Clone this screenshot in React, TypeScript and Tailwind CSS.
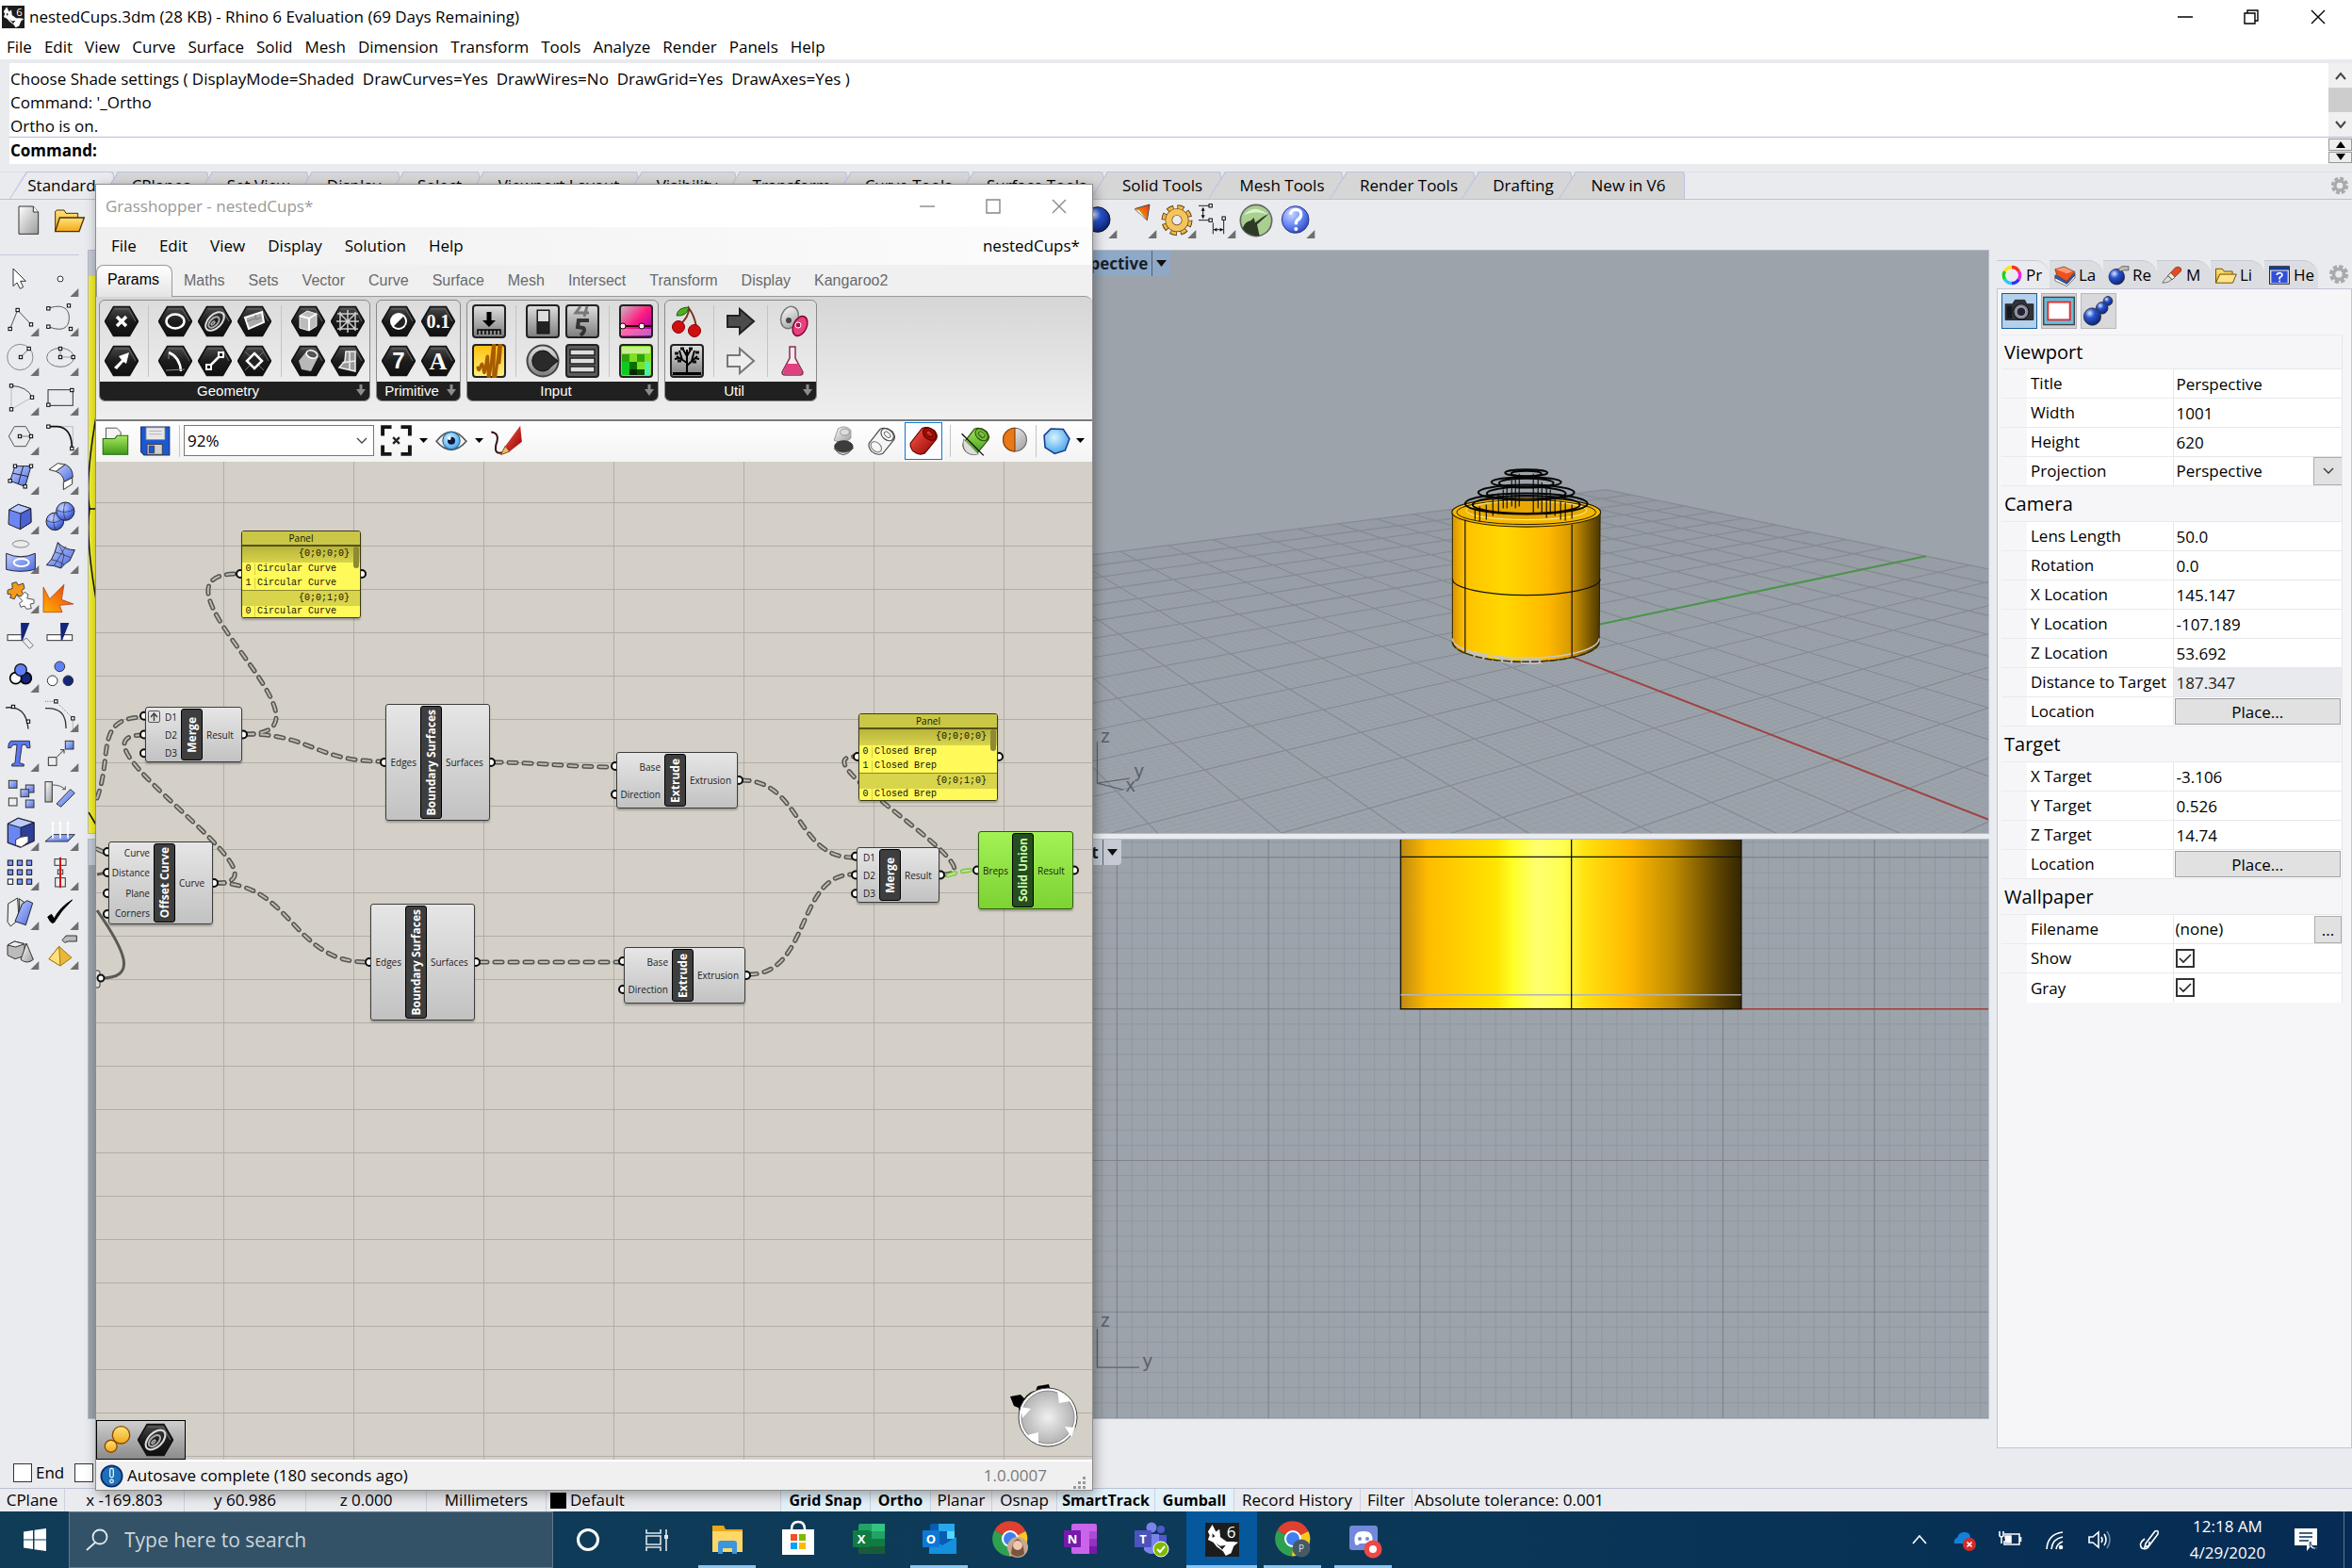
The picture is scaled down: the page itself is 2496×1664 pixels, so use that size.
import React from "react";
import type { ReactNode } from "react";

/* ---------- shared bits ---------- */

function Defs() {
  return (
    <svg width="0" height="0" className="absolute" aria-hidden="true">
      <defs>
        <linearGradient id="blue" x1="0" y1="0" x2="1" y2="1">
          <stop offset="0" stopColor="#c3d0ff" />
          <stop offset="1" stopColor="#4a6be0" />
        </linearGradient>
        <radialGradient id="ball" cx=".35" cy=".3" r=".8">
          <stop offset="0" stopColor="#c9d6ff" />
          <stop offset=".6" stopColor="#5c7df0" />
          <stop offset="1" stopColor="#2c3f9c" />
        </radialGradient>
        <radialGradient id="navy" cx=".35" cy=".3" r=".8">
          <stop offset="0" stopColor="#dfe8ff" />
          <stop offset=".35" stopColor="#2a55d0" />
          <stop offset="1" stopColor="#071a66" />
        </radialGradient>
        <linearGradient id="grey" x1="0" y1="0" x2="1" y2="1">
          <stop offset="0" stopColor="#ffffff" />
          <stop offset="1" stopColor="#9a9a9a" />
        </linearGradient>
        <linearGradient id="gold" x1="0" y1="0" x2="0" y2="1">
          <stop offset="0" stopColor="#ffe37a" />
          <stop offset="1" stopColor="#f0a818" />
        </linearGradient>
        <linearGradient id="fire" x1="0" y1="1" x2="1" y2="0">
          <stop offset="0" stopColor="#ffb000" />
          <stop offset="1" stopColor="#e83a10" />
        </linearGradient>
        <linearGradient id="dark" x1="0" y1="0" x2="0" y2="1">
          <stop offset="0" stopColor="#4a4a4a" />
          <stop offset=".5" stopColor="#1c1c1c" />
          <stop offset="1" stopColor="#101010" />
        </linearGradient>
        <linearGradient id="steel" x1="0" y1="0" x2="0" y2="1">
          <stop offset="0" stopColor="#e0e0e0" />
          <stop offset="1" stopColor="#7c7c7c" />
        </linearGradient>
        <radialGradient id="dial">
          <stop offset="0" stopColor="#f0f0f0" />
          <stop offset="1" stopColor="#b4b4b4" />
        </radialGradient>
        <linearGradient id="green" x1="0" y1="0" x2="0" y2="1">
          <stop offset="0" stopColor="#a8e860" />
          <stop offset="1" stopColor="#3f9a18" />
        </linearGradient>
        <linearGradient id="pink" x1="0" y1="0" x2="1" y2="1">
          <stop offset="0" stopColor="#c9c0c4" />
          <stop offset=".5" stopColor="#ff1a80" />
          <stop offset="1" stopColor="#7a00c0" />
        </linearGradient>
        <linearGradient id="yellow" x1="0" y1="0" x2="0" y2="1">
          <stop offset="0" stopColor="#ffbe10" />
          <stop offset="1" stopColor="#fff27a" />
        </linearGradient>
        <linearGradient id="red" x1="0" y1="0" x2="1" y2="1">
          <stop offset="0" stopColor="#ff5a4a" />
          <stop offset="1" stopColor="#8c0000" />
        </linearGradient>
        <radialGradient id="cyan" cx=".4" cy=".35" r=".7">
          <stop offset="0" stopColor="#d6f4ff" />
          <stop offset="1" stopColor="#3f9fe8" />
        </radialGradient>
        <linearGradient id="cup" x1="0" y1="0" x2="1" y2="0">
          <stop offset="0" stopColor="#d89400" />
          <stop offset=".08" stopColor="#ffc200" />
          <stop offset=".35" stopColor="#ffd800" />
          <stop offset=".65" stopColor="#ffb800" />
          <stop offset=".8" stopColor="#d89a00" />
          <stop offset="1" stopColor="#4a3600" />
        </linearGradient>
        <linearGradient id="cupFront" x1="0" y1="0" x2="1" y2="0">
          <stop offset="0" stopColor="#c08a10" />
          <stop offset=".08" stopColor="#ffbc00" />
          <stop offset=".28" stopColor="#ffe400" />
          <stop offset=".33" stopColor="#ffff28" />
          <stop offset=".4" stopColor="#ffff70" />
          <stop offset=".48" stopColor="#ffff50" />
          <stop offset=".54" stopColor="#ffe210" />
          <stop offset=".67" stopColor="#ffb900" />
          <stop offset=".8" stopColor="#c08c00" />
          <stop offset=".93" stopColor="#5e4500" />
          <stop offset="1" stopColor="#332500" />
        </linearGradient>
      </defs>
    </svg>
  );
}

function Svg({ s = 42, box = 126, children }: { s?: number; box?: number; children: ReactNode }) {
  return (
    <svg width={s} height={s} viewBox={`0 0 ${box} ${box}`} fill="none" stroke="#333" strokeWidth="3" aria-hidden="true" className="shrink-0">
      {children}
    </svg>
  );
}

function Sq({ p }: { p: number[][] }) {
  return (
    <>
      {p.map(([x, y]) => (
        <rect key={`${x}-${y}`} x={x - 5} y={y - 5} width="10" height="10" fill="#fff" stroke="#000" strokeWidth="3" />
      ))}
    </>
  );
}

const Corner = () => <path d="M124 93V120H97Z" fill="#6f6f6f" stroke="none" />;

function RhinoLogo({ w, h }: { w: number; h: number }) {
  return (
    <svg width={w} height={h} viewBox="0 0 38 38" aria-hidden="true" className="shrink-0">
      <rect width="38" height="38" fill="#1c1c1c" />
      <path d="M8 2l4 8 4-3 1 9 7 5 7 0 6 1-5 4-3 8-6 3-3-5-7-5-4-5-6-3 2-5-2-4z" fill="#fff" />
      <path d="M12 23l5 3 6-1-4 5-3-3zM8 12l3 3-3 2z" fill="#1c1c1c" />
      <text x="24" y="17" fontSize="18" fill="#fff" fontFamily="Open Sans">6</text>
    </svg>
  );
}

/* ---------- Rhino tool palette ---------- */

const palette: { name: string; flat?: boolean; art: ReactNode }[] = [
  { name: "Select", flat: true, art: <path d="M42 30V86L54 75 64 94 74 89 65 70H82Z" fill="#fff" /> },
  { name: "Point", art: <circle cx="66" cy="63" r="9" fill="#fff" /> },
  { name: "Polyline", art: <><path d="M32 96 56 36 99 82" stroke="#555" /><Sq p={[[56, 36], [32, 96], [99, 82]]} /></> },
  { name: "Curve", art: <><path d="M28 31C70 15 95 30 94 62S72 106 28 89" stroke="#555" /><Sq p={[[28, 31], [93, 22], [28, 89], [99, 96]]} /></> },
  { name: "Circle", art: <><circle cx="64" cy="60" r="41" stroke="#888" /><path d="M66 60 92 33" stroke="#777" /><Sq p={[[66, 60], [92, 33]]} /></> },
  { name: "Ellipse", art: <><ellipse cx="66" cy="61" rx="43" ry="30" stroke="#777" /><path d="M66 33V60H107" stroke="#999" /><Sq p={[[66, 33], [66, 60], [107, 60]]} /></> },
  { name: "Arc", art: <><path d="M36 25V100L102 62" stroke="#bbb" /><path d="M36 25Q88 28 102 62" stroke="#444" /><Sq p={[[36, 25], [102, 62], [36, 100]]} /></> },
  { name: "Rectangle", art: <><rect x="27" y="38" width="79" height="50" stroke="#333" /><Sq p={[[103, 39], [28, 86]]} /></> },
  { name: "Polygon", art: <><path d="M46 29H82L100 60 82 92H46L28 60Z" stroke="#555" /><path d="M63 60H99" stroke="#777" /><Sq p={[[63, 60], [99, 60]]} /></> },
  { name: "Fillet", art: <><path d="M28 29H106V99" stroke="#bbb" /><path d="M28 29H56Q103 32 103 99" strokeWidth="5" stroke="#111" /><Sq p={[[28, 29], [103, 99]]} /></> },
  { name: "Surface", art: <><path d="M48 29H99L80 94 32 76Z" fill="url(#blue)" stroke="#223" /><path d="M74 29 58 86M42 52 90 62" stroke="#223" /><Sq p={[[48, 29], [99, 29], [80, 94], [32, 76]]} /></> },
  { name: "Blend surface", art: <><path d="M30 40 58 20 82 24 52 46Z" fill="#fff" /><path d="M52 46 82 24Q106 34 106 64L78 78Q76 56 52 46Z" fill="url(#blue)" /><path d="M76 80 104 66V86L76 104Z" fill="#fff" /></> },
  { name: "Box", art: <><path d="M29 42 58 25 98 38 99 82 64 104 27 88Z" fill="#6a86f4" stroke="#223" /><path d="M29 42 58 25 98 38 66 54Z" fill="#bccbff" stroke="#223" /><path d="M66 54 98 38 99 82 64 104Z" fill="#4a62d4" stroke="#223" /></> },
  { name: "Boolean union", art: <><circle cx="49" cy="79" r="28" fill="url(#ball)" stroke="#223" /><circle cx="82" cy="47" r="29" fill="url(#ball)" stroke="#223" /><path d="M55 44Q85 56 110 40M82 18Q70 50 84 76M22 76Q48 90 68 74M49 52Q38 80 52 107" stroke="#223" strokeWidth="2" /></> },
  { name: "Project curve", art: <><ellipse cx="66" cy="25" rx="26" ry="11" stroke="#888" /><path d="M20 55Q66 76 112 55V106Q66 118 20 106Z" fill="url(#blue)" stroke="#223" /><ellipse cx="68" cy="84" rx="24" ry="12" stroke="#fff" strokeWidth="6" /></> },
  { name: "Mesh", art: <><path d="M58 20Q80 44 112 44L96 78Q82 84 68 102 46 92 22 92 40 76 48 52Z" fill="url(#blue)" stroke="#223" /><path d="M48 50Q70 56 98 68M36 74Q60 78 78 90M84 32 46 94M58 20 78 60 68 100" stroke="#223" strokeWidth="2" /></> },
  { name: "Join", art: <><path d="M24 46 40 40 38 24 52 20 58 30 74 24 78 40 68 48 76 62 60 66 54 58 46 74 32 70 36 60 24 58Z" fill="#f49a18" stroke="#444" /><path d="M54 62 66 66 78 52 90 60 86 72 108 76 108 88 96 90 100 104 84 106 78 96 66 100 62 88 72 80Z" fill="#fff" stroke="#555" /></> },
  { name: "Explode", flat: true, art: <path d="M12 116V36L32 74 78 28 70 76 108 90 64 94 72 116Z" fill="url(#fire)" stroke="#a33010" strokeWidth="2" /> },
  { name: "Trim", flat: true, art: <><rect x="24" y="62" width="46" height="18" fill="#fff" /><path d="M66 24H94L72 80H68Z" fill="#14267a" stroke="none" /><path d="M84 72 106 96 94 106 72 82Z" fill="#eee" stroke="#777" /></> },
  { name: "Split", flat: true, art: <><rect x="24" y="62" width="80" height="18" fill="#fff" /><path d="M66 24H94L72 80H68Z" fill="#14267a" stroke="none" /></> },
  { name: "Group", art: <><circle cx="82" cy="74" r="18" fill="#14267a" stroke="#000" strokeWidth="5" /><circle cx="50" cy="74" r="18" fill="#fff" stroke="#000" strokeWidth="5" /><circle cx="66" cy="48" r="19" fill="#5e80f8" stroke="#111" strokeWidth="4" /></> },
  { name: "Ungroup", flat: true, art: <><circle cx="64" cy="37" r="16" fill="#5e80f8" /><circle cx="41" cy="82" r="16" fill="#fff" /><circle cx="91" cy="82" r="16" fill="#14267a" /></> },
  { name: "Edit points", flat: true, art: <><path d="M18 42Q84 34 90 110" stroke="#333" strokeWidth="4" /><Sq p={[[42, 39], [90, 86]]} /></> },
  { name: "Control points", art: <><path d="M18 44Q86 40 84 108" stroke="#333" strokeWidth="4" /><path d="M18 22H52L106 76V110" stroke="#777" strokeDasharray="3 4" /><Sq p={[[52, 22], [106, 76]]} /></> },
  { name: "Text", art: <path d="M28 30 34 22H94L96 44H86L82 34H70L62 92 76 96V102H38V96L48 92 54 34H42L34 44H26Z" fill="#5a78f0" stroke="#334" /> },
  { name: "Scale", art: <><rect x="28" y="74" width="26" height="26" fill="#eee" /><rect x="82" y="22" width="26" height="26" fill="url(#blue)" /><path d="M56 72 78 50M66 50H78V62" /></> },
  { name: "Array random", flat: true, art: <>{[[28, 22], [82, 36], [66, 50], [82, 84]].map(([x, y]) => <rect key={y} x={x} y={y} width="26" height="24" fill="url(#blue)" />)}<rect x="28" y="78" width="26" height="24" fill="#eee" /></> },
  { name: "Rotate", flat: true, art: <><rect x="18" y="26" width="22" height="64" fill="url(#grey)" /><path d="M42 36Q66 36 82 50M72 50H82V40" stroke="#555" /><path d="M54 96 98 50 112 62 68 106Z" fill="url(#blue)" /></> },
  { name: "Cap holes", art: <><path d="M25 34 58 16 108 30V88L64 108 25 94Z" fill="#6a86f4" stroke="#223" strokeWidth="4" /><path d="M25 34 58 16 108 30 66 46Z" fill="#bccbff" stroke="#223" /><path d="M66 46 108 30V88L66 108Z" fill="#2c3f9c" stroke="#223" /><path d="M50 84 66 76 90 72V92L68 108 50 102Z" fill="#fff" /></> },
  { name: "Project", art: <><path d="M18 90 44 68H112L90 90Z" fill="url(#blue)" /><path d="M42 80V30M66 80V30M90 80V30" stroke="#fff" strokeWidth="5" /><path d="M34 38 42 22 50 38ZM58 38 66 22 74 38ZM82 38 90 22 98 38Z" fill="#fff" stroke="#ddd" strokeWidth="1" /></> },
  { name: "Array", art: <>{[0, 1, 2].flatMap((r) => [0, 1, 2].map((c) => <rect key={`${r}${c}`} x={25 + c * 30} y={24 + r * 30} width="16" height="16" fill={r === 2 && c === 0 ? "#fff" : "#7c98ff"} stroke="#111" />))}</> },
  { name: "Align", art: <><rect x="48" y="20" width="36" height="20" fill="#eee" /><rect x="58" y="54" width="16" height="14" fill="#eee" /><rect x="50" y="80" width="32" height="28" fill="#eee" /><path d="M66 14V112" stroke="#d01818" strokeWidth="6" /></> },
  { name: "Layer book", art: <><path d="M26 36 56 18 60 86 34 108 24 94Z" fill="#eee" /><path d="M60 20 76 30 64 80Z" fill="#ccc" /><path d="M70 38 86 26 104 34 82 104 48 92Z" fill="url(#blue)" stroke="#223" /></> },
  { name: "Check", art: <path d="M26 78 38 70 46 84Q66 46 104 24 66 60 46 96 38 100 34 92Z" fill="#000" stroke="#000" /> },
  { name: "Solids", art: <><path d="M24 42 46 30 78 38V76L48 86 24 74Z" fill="#bbb" /><path d="M24 42 46 30 78 38 50 48Z" fill="#eee" /><path d="M84 36 106 88Q86 104 66 88Z" fill="url(#grey)" /></> },
  { name: "Render", art: <><path d="M30 86 62 46 102 82 66 108Z" fill="#e8b838" stroke="#a07818" /><path d="M62 46 66 108 30 86Z" fill="#ffe07c" stroke="#a07818" /><path d="M72 26 84 12H118V30H92L80 34Z" fill="#bbb" /></> },
];

function Palette() {
  return (
    <div className="grid w-[84px] grid-cols-2">
      {palette.map((t) => (
        <button key={t.name} aria-label={t.name} className="block h-[42px] w-[42px]">
          <Svg>
            {t.art}
            {!t.flat && <Corner />}
          </Svg>
        </button>
      ))}
    </div>
  );
}

/* ---------- Rhino top bars ---------- */

const menus = ["File", "Edit", "View", "Curve", "Surface", "Solid", "Mesh", "Dimension", "Transform", "Tools", "Analyze", "Render", "Panels", "Help"];

const tabs: [string, string][] = [
  ["Standard", "w-[111px]"], ["CPlanes", "w-[100px]"], ["Set View", "w-[106px]"], ["Display", "w-[97px]"], ["Select", "w-[85px]"],
  ["Viewport Layout", "w-[168px]"], ["Visibility", "w-[104px]"], ["Transform", "w-[118px]"], ["Curve Tools", "w-[130px]"],
  ["Surface Tools", "w-[142px]"], ["Solid Tools", "w-[125px]"], ["Mesh Tools", "w-[129px]"], ["Render Tools", "w-[140px]"],
  ["Drafting", "w-[103px]"], ["New in V6", "w-[120px]"],
];

const toolCells: Record<number, [string, ReactNode]> = {
  0: ["New", <><path d="M30 18H76L92 36V106H30Z" fill="url(#grey)" stroke="#333" /><path d="M76 18V36H92" fill="#fff" stroke="#333" /></>],
  1: ["Open", <><path d="M20 98V34L26 30H48L54 40H92V56" fill="url(#gold)" stroke="#4a3000" /><path d="M20 98 34 54H112L96 98Z" fill="url(#gold)" stroke="#4a3000" strokeWidth="4" /></>],
  27: ["Render preview", <><circle cx="62" cy="60" r="40" fill="url(#navy)" stroke="#111" /><Corner /></>],
  28: ["Spotlight", <><path d="M54 26 102 12 94 62Z" fill="url(#fire)" stroke="#444" /><path d="M54 26 70 30 94 62Z" fill="#fff4b8" stroke="#888" strokeWidth="2" /><Corner /></>],
  29: ["Options", <><circle cx="63" cy="62" r="36" stroke="#5a4010" strokeWidth="27" strokeDasharray="18 10.27" /><circle cx="63" cy="62" r="36" stroke="#f0b848" strokeWidth="21" strokeDasharray="14 14.27" strokeDashoffset="-2" /><circle cx="63" cy="62" r="26" stroke="#5a4010" strokeWidth="23" /><circle cx="63" cy="62" r="26" stroke="#f6c45c" strokeWidth="19" /><Corner /></>],
  30: ["Dimension", <><path d="M6 16H46M20 24V52M6 62H40M52 70V106M86 56V106M54 92H84" stroke="#222" /><path d="M20 20 14 32H26ZM20 58 14 46H26ZM54 92 64 86V98ZM84 92 74 86V98Z" fill="#111" stroke="none" /><Sq p={[[44, 16], [44, 62], [86, 56]]} /><Corner /></>],
  31: ["Grasshopper", <><circle cx="63" cy="63" r="50" fill="#a8cf90" stroke="#666" strokeWidth="5" /><path d="M20 88Q28 66 46 64L56 54 60 70Q84 50 106 40L66 76 74 112Q36 114 20 88Z" fill="#2d3a28" stroke="none" /><path d="M24 46Q58 6 102 46 66 28 24 46Z" fill="#dcf2ce" stroke="none" /></>],
  32: ["Help", <><circle cx="62" cy="60" r="43" fill="url(#ball)" stroke="#26349a" /><path d="M46 44Q48 28 64 28 82 30 80 46 78 56 68 62 64 66 64 76" stroke="#fff" strokeWidth="10" /><circle cx="64" cy="90" r="6" fill="#fff" stroke="none" /><Corner /></>],
};

function TopBars() {
  return (
    <>
      <header className="flex h-9 items-center bg-white pl-[2px]">
        <RhinoLogo w={24} h={24} />
        <h1 className="ml-[5px] text-[17px] leading-6 text-black">nestedCups.3dm (28 KB) - Rhino 6 Evaluation (69 Days Remaining)</h1>
        <div className="ml-auto flex items-center">
          <button aria-label="Minimize" className="flex w-[70px] justify-center">
            <svg width="16" height="16" stroke="#000" strokeWidth="1.5"><path d="M0 8H16" /></svg>
          </button>
          <button aria-label="Restore" className="flex w-[70px] justify-center">
            <svg width="16" height="16" fill="none" stroke="#000" strokeWidth="1.4"><path d="M1 4H12V15H1ZM4 4V1H15V12H12" /></svg>
          </button>
          <button aria-label="Close" className="flex w-[72px] justify-center">
            <svg width="16" height="16" stroke="#000" strokeWidth="1.4"><path d="M1 1 15 15M15 1 1 15" /></svg>
          </button>
        </div>
      </header>
      <nav className="flex h-[27px] items-center gap-[13px] bg-white pl-[7px] text-[17px] leading-[26px] text-black">
        {menus.map((m) => (
          <button key={m}>{m}</button>
        ))}
      </nav>
      <section className="border-t-4 border-[#e9eaed] pb-2 pl-[10px]">
        <div className="flex h-[78px] bg-white">
          <div className="flex-1 pt-1 pl-px text-[17px] leading-[25px] whitespace-pre text-black">
            <p>Choose Shade settings ( DisplayMode=Shaded  DrawCurves=Yes  DrawWires=No  DrawGrid=Yes  DrawAxes=Yes )</p>
            <p>Command: '_Ortho</p>
            <p>Ortho is on.</p>
          </div>
          <div className="flex w-[25px] flex-col items-center bg-[#f0f0f0]">
            <svg width="25" height="26" fill="none" stroke="#444" strokeWidth="2"><path d="M8 17 13 11 18 17" /></svg>
            <div className="w-full flex-1 bg-[#cdcdcd]" />
            <svg width="25" height="26" fill="none" stroke="#444" strokeWidth="2"><path d="M8 10 13 16 18 10" /></svg>
          </div>
        </div>
        <label className="flex h-[29px] items-center border-t border-[#b9bdd6] bg-white pl-px text-[17px] font-bold text-black">
          Command:
          <input className="ml-2 h-6 flex-1 outline-none" />
          <span className="flex h-full w-[25px] flex-col gap-px bg-[#e9eaed] py-px">
            <button aria-label="Up" className="flex flex-1 items-center justify-center border border-[#999] bg-[#eee]"><svg width="10" height="7"><path d="M0 7H10L5 0Z" /></svg></button>
            <button aria-label="Down" className="flex flex-1 items-center justify-center border border-[#999] bg-[#eee]"><svg width="10" height="7"><path d="M0 0H10L5 7Z" /></svg></button>
          </span>
        </label>
      </section>
      <section className="border-t border-[#dcdee4]">
        <div className="flex h-[29px] items-end border-b border-[#bcc1d8] pr-[3px] pl-[10px]">
          {tabs.map(([t, w], i) => (
            <button key={t} className={`${w} relative h-[29px] text-center text-[17px] leading-[30px] text-black`}>
              <span className={`${i === 0 ? "left-0" : "-left-[14px]"} absolute inset-y-0 right-0 rounded-tr bg-[#bcc3e0] [clip-path:polygon(18px_0,100%_0,100%_100%,0_100%)]`} />
              <span className={`${i === 0 ? "left-px bg-[#eaebef]" : "-left-[13px] bg-[#d6d6d7]"} absolute top-px right-px bottom-0 rounded-tr [clip-path:polygon(18px_0,100%_0,100%_100%,0_100%)]`} />
              <span className="relative whitespace-nowrap">{t}</span>
            </button>
          ))}
          <span className="ml-auto self-center"><Gear s={20} /></span>
        </div>
        <div className="flex h-[53px] pt-px pl-[10px]">
          {Array.from({ length: 33 }, (_, i) => (
            <button key={i} aria-label={toolCells[i]?.[0] ?? "Tool"} className="h-[42px] w-[42px] shrink-0">
              {toolCells[i] && <Svg>{toolCells[i][1]}</Svg>}
            </button>
          ))}
        </div>
      </section>
    </>
  );
}

function Gear({ s }: { s: number }) {
  return (
    <svg width={s} height={s} viewBox="0 0 24 24" fill="none" aria-hidden="true">
      <circle cx="12" cy="12" r="9" stroke="#aaaaac" strokeWidth="4" strokeDasharray="4.7 2.36" />
      <circle cx="12" cy="12" r="6" stroke="#aaaaac" strokeWidth="4" />
    </svg>
  );
}

/* ---------- viewports ---------- */

const view = { cam: [145.147, -107.189, 53.692], dir: [-0.7913, 0.5749, -0.2079], right: [0.5878, 0.8091, 0], up: [-0.1682, 0.1222, 0.9782] };

function project(x: number, y: number, z = 0) {
  const v = [x - view.cam[0], y - view.cam[1], z - view.cam[2]];
  const dot = (a: number[]) => a[0] * v[0] + a[1] * v[1] + a[2] * v[2];
  const f = 1291.7 / dot(view.dir);
  return `${(1610.5 + f * dot(view.right)).toFixed(1)} ${(576 - f * dot(view.up)).toFixed(1)}`;
}

function gridPath(major: boolean) {
  let d = "";
  for (let i = -100; i <= 100; i += major ? 10 : 1) {
    if (!major && i % 10 === 0) continue;
    d += `M${project(i, -100)}L${project(i, 100)}M${project(-100, i)}L${project(100, i)}`;
  }
  return d;
}

function ViewTag({ name, active }: { name: string; active?: boolean }) {
  return (
    <button className={`${active ? "bg-[#8ea8c8]" : "bg-[#c5cad3]"} absolute top-0 left-0 flex h-[27px] items-center rounded-br text-[17px] font-bold whitespace-nowrap text-[#1a2028]`}>
      <span className="pr-1 pl-[9px]">{name}</span>
      <span className="flex h-full items-center border-l border-[#55606c] px-[4px]"><svg width="11" height="7"><path d="M0 0H11L5.5 7Z" fill="#111" /></svg></span>
    </button>
  );
}

const viewBase = "relative overflow-hidden border border-[#b4bbcc] bg-[#9ca3ab]";

function Perspective() {
  return (
    <div className={viewBase}>
      <svg className="block h-full w-full" viewBox="1110 266 1001 620" preserveAspectRatio="xMaxYMin slice" fill="none">
        <path d={gridPath(false)} stroke="#8b9199" strokeWidth=".5" opacity=".45" />
        <path d={gridPath(true)} stroke="#868b93" strokeWidth="1.3" />
        <path d={`M${project(0, 0)}L${project(0, 100)}`} stroke="#479547" strokeWidth="2" />
        <path d={`M${project(0, 0)}L${project(100, 0)}`} stroke="#a04444" strokeWidth="2" />
        <path d="M1541 544V682A78 21 0 0 0 1697 682L1698 544A79 15 0 0 0 1541 544Z" fill="url(#cup)" stroke="#2a2000" strokeWidth="1" />
        <path d="M1541 678A78 21 0 0 0 1697 678" stroke="#c8c8c8" strokeWidth="1.5" />
        <path d="M1556 693Q1600 706 1640 702" stroke="#c4c4c4" strokeWidth="5" strokeDasharray="22 12 16 9" />
        <path d="M1541 682A78 21 0 0 0 1697 682" stroke="#3a3000" strokeWidth="1.5" strokeDasharray="8 2" />
        <ellipse cx="1619.5" cy="544" rx="79" ry="15.5" fill="#f5b800" stroke="#2a2000" strokeWidth="1.2" />
        <ellipse cx="1619.5" cy="544" rx="74" ry="13" stroke="#2a2000" strokeWidth="1" />
        <ellipse cx="1619.5" cy="542" rx="64" ry="10" fill="#e8a800" stroke="#fff0a0" strokeWidth="1" />
        <path d="M1541 615A78 17 0 0 0 1698 615M1554.500 552V694M1668 557V698" stroke="#111" strokeWidth="1.2" />
        <path d="M1565 540V552M1570 538V554M1577 536V552M1584 528V548M1590 524V546M1595 520V540M1599 516V540M1604 510V538M1608 505V540M1612 503V538M1627 503V545M1632 505V540M1636 512V546M1641 515V550M1645 520V546M1650 528V548M1656 532V552M1661 534V553M1668 536V551" stroke="#111" strokeWidth="1.2" />
        <g stroke="#050505" strokeWidth="2">
          <ellipse cx="1619.5" cy="535" rx="65" ry="11" />
          <ellipse cx="1619.5" cy="536" rx="57" ry="9.500" />
          <ellipse cx="1619.5" cy="523" rx="51" ry="8" />
          <ellipse cx="1619.5" cy="524" rx="42" ry="7" />
          <ellipse cx="1619.5" cy="512" rx="37" ry="5.500" />
          <ellipse cx="1619.5" cy="513" rx="29" ry="5" />
          <ellipse cx="1619.5" cy="502" rx="22.500" ry="3.500" />
          <ellipse cx="1619.5" cy="503" rx="16" ry="3" />
        </g>
        <path d="M1163.500 788V832L1198 827M1163.500 832 1191 839" stroke="#5e636b" strokeWidth="1.2" />
        <g fill="#5a5f66" fontSize="20" fontFamily="Liberation Sans">
          <text x="1167" y="789">z</text>
          <text x="1203" y="826">y</text>
          <text x="1194" y="841">x</text>
        </g>
      </svg>
      <ViewTag name="Perspective" active />
    </div>
  );
}

function lines(step: number, skip: boolean) {
  let d = "";
  for (let i = -40; i <= 40; i++) {
    if (skip && i % 10 === 0) continue;
    const x = 1667.5 + i * step;
    const y = 1071 + i * step;
    if (x > 1100 && x < 2112) d += `M${x} 891V1507`;
    if (y > 891 && y < 1507) d += `M1100 ${y}H2112`;
  }
  return d;
}

function Front() {
  return (
    <div className={viewBase}>
      <svg className="block h-full w-full" viewBox="1110 891 1001 616" preserveAspectRatio="xMaxYMin slice" fill="none">
        <path d={lines(16.1, true)} stroke="#91989f" strokeWidth="1" />
        <path d={lines(161, false)} stroke="#7f848c" strokeWidth="1.2" />
        <path d="M1848 1071H2112" stroke="#a04040" strokeWidth="1.6" />
        <rect x="1486" y="880" width="362" height="191" fill="url(#cupFront)" stroke="#1a1400" strokeWidth="1.4" />
        <path d="M1486 1056H1848" stroke="#b4b4b4" strokeWidth="1.6" />
        <path d="M1486 909.500H1848M1667.500 890V1071" stroke="#111" strokeWidth="1.3" />
        <path d="M1163.500 1411V1452H1208" stroke="#5e636b" strokeWidth="1.4" />
        <g fill="#5a5f66" fontSize="20" fontFamily="Liberation Sans">
          <text x="1167" y="1409">z</text>
          <text x="1212" y="1452">y</text>
        </g>
      </svg>
      <ViewTag name="Front" />
    </div>
  );
}

function Viewports() {
  return (
    <div className="grid min-w-0 flex-1 grid-cols-[1011fr_1001fr] grid-rows-[620fr_616fr] gap-x-[5px] gap-y-[5px] pb-10">
      <div className="relative overflow-hidden border border-[#b4bbcc] bg-[#f4f02c]">
        <svg className="block h-full w-full" fill="none" stroke="#111" strokeWidth="1.5"><path d="M0 274H20M10 165Q-4 240 1 274 -4 310 12 392M0 596 12 616" /></svg>
        <ViewTag name="Top" />
      </div>
      <Perspective />
      <div className={viewBase}><ViewTag name="Right" /></div>
      <Front />
    </div>
  );
}

/* ---------- properties panel ---------- */

type Row = { label: string; value?: string; kind?: "select" | "button" | "check" | "file" | "readonly" };
const groups: { title: string; rows: Row[] }[] = [
  { title: "Viewport", rows: [{ label: "Title", value: "Perspective" }, { label: "Width", value: "1001" }, { label: "Height", value: "620" }, { label: "Projection", value: "Perspective", kind: "select" }] },
  { title: "Camera", rows: [{ label: "Lens Length", value: "50.0" }, { label: "Rotation", value: "0.0" }, { label: "X Location", value: "145.147" }, { label: "Y Location", value: "-107.189" }, { label: "Z Location", value: "53.692" }, { label: "Distance to Target", value: "187.347", kind: "readonly" }, { label: "Location", kind: "button" }] },
  { title: "Target", rows: [{ label: "X Target", value: "-3.106" }, { label: "Y Target", value: "0.526" }, { label: "Z Target", value: "14.74" }, { label: "Location", kind: "button" }] },
  { title: "Wallpaper", rows: [{ label: "Filename", value: "(none)", kind: "file" }, { label: "Show", kind: "check" }, { label: "Gray", kind: "check" }] },
];

function Cell({ row, id }: { row: Row; id: string }) {
  switch (row.kind) {
    case "select":
      return (
        <div className="relative h-[30px]">
          <select id={id} className="h-full w-full appearance-none pl-[3px] outline-none"><option>{row.value}</option></select>
          <span className="pointer-events-none absolute inset-y-0 right-0 flex w-[30px] items-center justify-center border border-r-0 border-[#adadad] bg-[#e1e1e1]">
            <svg width="12" height="8" fill="none" stroke="#333" strokeWidth="1.3"><path d="M1 1 6 6 11 1" /></svg>
          </span>
        </div>
      );
    case "button":
      return <div className="h-[30px] p-px"><button id={id} className="h-full w-full border border-[#a0a0a0] bg-[#e1e1e1] leading-none">Place...</button></div>;
    case "check":
      return (
        <div className="flex h-[30px] items-center pl-[2px]">
          <span className="relative h-5 w-5">
            <input id={id} type="checkbox" defaultChecked className="peer block h-5 w-5 appearance-none border-2 border-[#333] bg-white" />
            <svg width="20" height="20" className="pointer-events-none absolute inset-0 hidden peer-checked:block" fill="none" stroke="#222" strokeWidth="1.6"><path d="M4 10 8 14 16 6" /></svg>
          </span>
        </div>
      );
    case "file":
      return (
        <div className="flex h-[30px] items-center pl-[2px]">
          <input id={id} defaultValue={row.value} className="min-w-0 flex-1 outline-none" />
          <button aria-label="Browse" className="h-[29px] w-[29px] shrink-0 border border-[#adadad] bg-[#e1e1e1] leading-none">...</button>
        </div>
      );
    default:
      return <input id={id} defaultValue={row.value} readOnly={row.kind === "readonly"} className={`${row.kind === "readonly" ? "bg-[#e9eaee] text-[#222]" : "bg-white"} block h-[30px] w-full pl-[3px] outline-none`} />;
  }
}

const panelTabs: [string, ReactNode][] = [
  ["Pr", <g key="p" strokeWidth="18"><path d="M63 18A45 45 0 0 1 102 41" stroke="#ff3020" /><path d="M102 41A45 45 0 0 1 102 86" stroke="#f020e0" /><path d="M102 86A45 45 0 0 1 63 108" stroke="#3030ff" /><path d="M63 108A45 45 0 0 1 24 86" stroke="#20c8ff" /><path d="M24 86A45 45 0 0 1 24 41" stroke="#20d020" /><path d="M24 41A45 45 0 0 1 63 18" stroke="#ffe020" /></g>],
  ["La", <><path d="M10 76 76 112 120 62V78L76 124 10 94Z" fill="#fff" stroke="#222" /><path d="M10 62 76 100 120 50V64L76 112 10 78Z" fill="#2060d0" stroke="#222" /><path d="M10 30 60 16 120 44 76 98 20 64Z" fill="#f05020" stroke="#222" /><path d="M14 30 60 18 110 42 74 54Z" fill="#ff9a70" stroke="none" /></>],
  ["Re", <><circle cx="54" cy="72" r="44" fill="url(#navy)" stroke="#113" /><path d="M62 30 84 14H120V36H96L74 42Z" fill="#bbb" stroke="#222" /></>],
  ["M", <><path d="M40 66 80 22Q100 10 112 24 120 40 104 50L62 88Z" fill="#e84a20" stroke="#222" /><path d="M56 50 80 74 64 88 40 66Z" fill="#f4e8d0" stroke="#222" /><path d="M10 106Q30 70 44 70L60 86Q50 104 10 106Z" fill="#ddd" stroke="#222" /></>],
  ["Li", <><path d="M8 106V28H44L54 42H100V58" fill="url(#gold)" stroke="#6a4a00" strokeWidth="5" /><path d="M8 106 30 58H122L102 106Z" fill="#ffe48a" stroke="#6a4a00" strokeWidth="5" /></>],
  ["He", <><rect x="8" y="14" width="110" height="98" fill="#ddd" stroke="#222" strokeWidth="5" /><path d="M10 16H116V34H10Z" fill="#123a9c" stroke="none" /><rect x="18" y="40" width="90" height="66" fill="#3050d8" stroke="none" /><path d="M48 62Q50 50 64 50 80 52 78 64 74 74 64 76V86" stroke="#fff" strokeWidth="9" /><circle cx="64" cy="97" r="5" fill="#fff" stroke="none" /></>],
];

function Properties() {
  return (
    <aside className="mb-[9px] ml-2 flex w-[377px] shrink-0 flex-col pt-[10px]">
      <div className="flex h-[31px] items-end">
        {panelTabs.map(([t, art], i) => (
          <button key={t} className={`${i === 0 ? "w-14 bg-transparent" : "w-[57px] bg-[#dcdde0]"} flex h-[30px] shrink-0 items-center gap-[3px] rounded-tr-2xl border-t border-[#c4c8d8] pl-1 text-[17px]`}>
            <Svg s={24}>{art}</Svg>
            <span>{t}</span>
          </button>
        ))}
        <span className="mr-[3px] ml-auto self-center"><Gear s={22} /></span>
      </div>
      <div className="flex-1 border border-[#c0c5d8] bg-[#f6f6f8] pt-1 pr-[9px] pl-1">
        <div className="flex gap-1">
          <button aria-label="Camera" className="flex h-[38px] w-[38px] items-center justify-center border border-[#1460a0] bg-[#b4d0ea]">
            <Svg s={34}><path d="M8 36H36L46 20H84L92 36H118V98H8Z" fill="#30343a" stroke="#111" /><circle cx="70" cy="66" r="30" fill="#889" stroke="#111" strokeWidth="4" /><circle cx="70" cy="66" r="18" fill="#223" stroke="#ccd" /><path d="M14 44H34V92H14Z" fill="#15171a" stroke="none" /></Svg>
          </button>
          <button aria-label="Viewport frame" className="flex h-[38px] w-[38px] items-center justify-center border border-[#b0b0b4] bg-[#d4d4d8]">
            <Svg s={36}><rect x="6" y="12" width="114" height="102" fill="#64c0e0" stroke="#444" strokeWidth="5" /><rect x="22" y="30" width="82" height="66" fill="#fff" stroke="#e83030" strokeWidth="7" /></Svg>
          </button>
          <button aria-label="Material" className="flex h-[38px] w-[38px] items-center justify-center border border-[#b8b8bc] bg-[#d9d9dc]">
            <Svg s={36}><circle cx="98" cy="26" r="17" fill="url(#navy)" /><circle cx="76" cy="52" r="22" fill="url(#navy)" /><circle cx="40" cy="84" r="32" fill="url(#navy)" /></Svg>
          </button>
        </div>
        <table className="mt-[6px] w-full table-fixed border-collapse border-r border-[#e6e7eb] text-left text-[17px] text-black">
          <colgroup><col className="w-[27px]" /><col className="w-[155px]" /><col /></colgroup>
          {groups.map((g, gi) => (
            <tbody key={g.title}>
              <tr className={gi === 0 ? "h-9" : "h-[38px]"}>
                <th colSpan={3} className="border-t border-[#e9eaee] pl-[3px] text-[20px] leading-7 font-normal">{g.title}</th>
              </tr>
              {g.rows.map((r) => {
                const id = `${g.title}-${r.label}`;
                return (
                  <tr key={r.label} className="h-[31px]">
                    <td className="border-t border-[#e9eaee] p-0" />
                    <th className="border-t border-[#e9eaee] bg-white p-0 pl-1 font-normal whitespace-nowrap"><label htmlFor={id}>{r.label}</label></th>
                    <td className="border-t border-l border-[#e6e7eb] bg-white p-0"><Cell row={r} id={id} /></td>
                  </tr>
                );
              })}
            </tbody>
          ))}
        </table>
      </div>
    </aside>
  );
}

/* ---------- Rhino status ---------- */

const status: [string, string][] = [
  ["CPlane", "w-[69px]"], ["x -169.803", "w-[127px]"], ["y 60.986", "w-[129px]"], ["z 0.000", "w-[128px]"], ["Millimeters", "w-[127px]"],
  ["Default", "w-[249px]"], ["Grid Snap", "w-[95px]"], ["Ortho", "w-[64px]"], ["Planar", "w-[65px]"], ["Osnap", "w-[69px]"],
  ["SmartTrack", "w-[104px]"], ["Gumball", "w-[84px]"], ["Record History", "w-[134px]"], ["Filter", "w-[55px]"],
];
const onItems = ["Grid Snap", "Ortho", "SmartTrack", "Gumball"];

function StatusBar() {
  return (
    <>
      <div className="flex h-[33px] items-center gap-[11px] pl-[14px] text-[17px] text-black">
        <label className="flex items-center gap-1"><input type="checkbox" className="h-5 w-5 appearance-none border border-[#333] bg-white" />End</label>
        <input type="checkbox" aria-label="Near" className="h-5 w-5 appearance-none border border-[#333] bg-white" />
      </div>
      <div className="flex h-[25px] border-t border-[#bcc1d4] text-[17px] leading-6 text-black">
        {status.map(([t, w]) => (
          <button key={t} className={`${w} ${onItems.includes(t) ? "bg-[#e2f1fa] text-[16px] font-bold" : ""} flex shrink-0 items-center border-r border-[#cdd0de] whitespace-nowrap ${t === "Default" ? "gap-1 pl-1" : "justify-center"}`}>
            {t === "Default" && <span className="h-[17px] w-[17px] bg-black" />}
            {t}
          </button>
        ))}
        <span className="ml-[2px]">Absolute tolerance: 0.001</span>
      </div>
    </>
  );
}

/* ---------- Grasshopper ribbon ---------- */

const hexes: Record<string, ReactNode> = {
  point: <path d="M13 13 23 23M23 13 13 23" stroke="#fff" strokeWidth="3.500" />,
  vector: <path d="M10 25 18 17 15 13 26 9 23 21 20 19 13 27Z" fill="#fff" />,
  circle: <ellipse cx="18" cy="18" rx="9.500" ry="7.500" stroke="#fff" strokeWidth="2.500" />,
  spiral: <><ellipse cx="18" cy="18" rx="12" ry="7" transform="rotate(-45 18 18)" stroke="#ddd" strokeWidth="2" /><ellipse cx="17" cy="19" rx="7" ry="4" transform="rotate(-45 17 19)" stroke="#aaa" strokeWidth="2" /><ellipse cx="16" cy="20" rx="2.500" ry="1" transform="rotate(-45 16 20)" stroke="#aaa" strokeWidth="1.500" /></>,
  plane: <><path d="M8 14 26 8 28 19 12 26Z" fill="#aaa" stroke="#fff" strokeWidth="2" /><path d="M10 18 19 15M19 11 20 16 25 14" stroke="#777" /></>,
  arc: <><path d="M11 9Q23 14 24 29" stroke="#fff" strokeWidth="2.500" /><path d="M8 28 28 27M11 11V16" stroke="#888" /></>,
  line: <><path d="M12 24 24 12" stroke="#fff" strokeWidth="2.500" /><path d="M9 22H14V27H9ZM22 9H27V14H22Z" fill="#111" stroke="#fff" strokeWidth="2" /></>,
  rect: <><path d="M8 8 28 28M28 8 8 28" stroke="#777" /><path d="M18 10 26 18 18 26 10 18Z" fill="#222" stroke="#fff" strokeWidth="2.500" /></>,
  box: <><path d="M9 12 17 7 27 10V23L19 28 9 25Z" fill="#bbb" stroke="#eee" /><path d="M9 12 19 15 27 10M19 15V28" stroke="#fff" strokeWidth="2" /></>,
  mesh: <path d="M10 8V28M18 6V30M26 8V28M7 10H29M6 18H30M7 26H29M10 10 26 26M26 10 10 26" stroke="#ccc" strokeWidth="1.500" />,
  brep: <><path d="M8 18 17 7 29 13 21 29 11 27Z" fill="#b8b8b8" /><ellipse cx="22" cy="11" rx="6" ry="4" transform="rotate(20 22 11)" fill="#555" stroke="#fff" strokeWidth="1.500" /></>,
  surface: <path d="M16 8H26V29L9 25 15 18ZM12 20 26 18M20 8V27" fill="#999" stroke="#eee" strokeWidth="1.500" />,
  bool: <><circle cx="18" cy="18" r="9" fill="#fff" /><path d="M23 13A7 7 0 0 1 13 23Z" fill="#222" /></>,
};

function HexFrame({ children }: { children: ReactNode }) {
  return (
    <>
      <path d="M9.500 2.500H26.500L35.500 18 26.500 33.500H9.500L0.500 18Z" fill="url(#dark)" stroke="#111" strokeWidth="1.500" />
      <path d="M10.500 5H25.500L33 18" stroke="#666" strokeWidth="1" />
      {children}
    </>
  );
}

const glyphText = (t: string, size: number, family: string) => (
  <text x="18" y={18 + size * 0.35} fontSize={size} fontWeight="bold" textAnchor="middle" fill="#fff" stroke="none" fontFamily={family}>{t}</text>
);

const tile = (fill: string) => <rect x="1" y="1" width="34" height="34" rx="3" fill={fill} stroke="#222" strokeWidth="2" />;

const ribbonArt: Record<string, ReactNode> = {
  ...Object.fromEntries(Object.entries(hexes).map(([k, v]) => [k, <HexFrame key={k}>{v}</HexFrame>])),
  number: <HexFrame>{glyphText("0.1", 20, "Liberation Serif")}</HexFrame>,
  integer: <HexFrame>{glyphText("7", 24, "Liberation Sans")}</HexFrame>,
  text: <HexFrame>{glyphText("A", 26, "Liberation Serif")}</HexFrame>,
  button: <>{tile("url(#steel)")}<path d="M18 8V18" stroke="#000" strokeWidth="5" /><path d="M11 17H25L18 24Z" fill="#000" /><path d="M6 32V27H30V32M10 27V32M14 27V32M18 27V32M22 27V32M26 27V32" stroke="#000" strokeWidth="1.500" /></>,
  graph: <>{tile("url(#yellow)")}<path d="M6 25Q7 31 9 24T12 27 15 20 17 27 21 14 23 24 28 9 29 20" stroke="#a85c00" strokeWidth="3" strokeLinecap="round" /></>,
  toggle: <>{tile("url(#steel)")}<rect x="12" y="6" width="13" height="25" fill="#222" stroke="#111" /><rect x="13" y="7" width="11" height="11" fill="#ddd" /></>,
  digit: <>{tile("url(#steel)")}<path d="M16 2 11 9H25M23 2 20 13" stroke="#777" strokeWidth="3" /><path d="M25 17H14L13 24 19 25Q22 28 16 33" stroke="#333" strokeWidth="4" /></>,
  knob: <><circle cx="18" cy="18" r="16.500" fill="url(#steel)" stroke="#444" strokeWidth="2" /><path d="M34 18 27 24A11 11 0 1 1 27 12Z" fill="#2a2a2a" stroke="#111" /></>,
  list: <>{tile("#5c5c5c")}<path d="M5 6H31V12H5ZM5 15H31V21H5ZM5 24H31V30H5Z" fill="#ddd" stroke="#222" strokeWidth="1.500" /></>,
  gradient: <>{tile("url(#pink)")}<path d="M2 26H34V33H2Z" fill="#ffb0d8" opacity=".5" /><path d="M2 23H34" stroke="#200" strokeWidth="2" /><circle cx="24" cy="23" r="3" fill="#fff" stroke="#200" /><circle cx="4" cy="23" r="3" fill="#fff" stroke="#200" /></>,
  swatch: <>{tile("#7ee020")}<path d="M3 11H11V19H3ZM19 11H27V19H19Z" fill="#2fa010" /><path d="M11 19H19V27H11Z" fill="#067000" /><path d="M11 27H19V33H11Z" fill="#032800" /><path d="M19 27H27V33H19Z" fill="#0a5000" /><path d="M27 19H33V33H27Z" fill="#50f0a0" /><path d="M3 19H11V33H3Z" fill="#10c820" /><path d="M3 3H33V10H3Z" fill="#c8f090" /></>,
  cherry: <><path d="M10 22Q20 14 20 4Q26 12 28 24" stroke="#7a3020" strokeWidth="2" /><path d="M7 12Q8 3 20 3 18 13 7 12Z" fill="#4fae20" stroke="#206010" /><circle cx="9" cy="24" r="6.500" fill="#d01010" stroke="#800" /><circle cx="26" cy="28" r="6.500" fill="#d01010" stroke="#800" /></>,
  tree: <>{tile("url(#steel)")}<path d="M3 30H33V33H3Z" fill="#000" /><path d="M18 31V20L7 13M18 23 29 13M18 21V6M13 17 10 7M23 18 26 7M10 15 5 16M26 15 31 16M18 13 14 6M18 13 22 6" stroke="#000" strokeWidth="2" /><path d="M5 10H9M11 5H15M20 5H24M27 9H31M8 18H12M24 19H28" stroke="#111" strokeWidth="3" /></>,
  arrowDark: <path d="M4 12H17V5L32 18 17 31V24H4Z" fill="#4c4c4c" stroke="#222" strokeWidth="2" />,
  arrowLight: <path d="M4 12H17V5L32 18 17 31V24H4Z" fill="#eee" stroke="#777" strokeWidth="2" />,
  pills: <><ellipse cx="13" cy="14" rx="9" ry="12" transform="rotate(20 13 14)" fill="url(#grey)" stroke="#777" strokeWidth="1.500" /><circle cx="12" cy="17" r="3" fill="#444" /><ellipse cx="24" cy="23" rx="7" ry="11" transform="rotate(25 24 23)" fill="#e84080" stroke="#800838" strokeWidth="1.500" /><circle cx="22" cy="22" r="3" fill="#b01050" stroke="#fff" /></>,
  flask: <><path d="M13 3H19V15L27 30Q27 33 24 33H8Q5 33 5 30L13 15Z" fill="#fbe8f0" stroke="#803050" strokeWidth="1.500" /><path d="M10 21H22L26.500 30Q26 32.500 24 32.500H8Q6 32 6 30Z" fill="#e04080" /></>,
};

const ribbon: { name: string; cols: (string[] | null)[] }[] = [
  { name: "Geometry", cols: [["point", "vector"], null, ["circle", "arc"], ["spiral", "line"], ["plane", "rect"], null, ["box", "brep"], ["mesh", "surface"]] },
  { name: "Primitive", cols: [["bool", "integer"], ["number", "text"]] },
  { name: "Input", cols: [["button", "graph"], null, ["toggle", "knob"], ["digit", "list"], null, ["gradient", "swatch"]] },
  { name: "Util", cols: [["cherry", "tree"], null, ["arrowDark", "arrowLight"], null, ["pills", "flask"]] },
];

function Ribbon() {
  return (
    <div className="flex h-[131px] shrink-0 items-start gap-[6px] rounded-tr-lg border-t border-[#9a9a9a] bg-gradient-to-b from-[#d6d6d6] to-[#efefef] pt-[3px] pl-[3px]">
      {ribbon.map((g) => (
        <div key={g.name} className="flex flex-col overflow-hidden rounded-md border border-[#8a8a8a] bg-gradient-to-b from-[#dcdcdc] to-[#f0f0f0]">
          <div className="flex px-[2px] pt-px pb-px">
            {g.cols.map((c, i) =>
              c ? (
                <div key={i} className="flex w-[42px] flex-col">
                  {c.map((n) => (
                    <button key={n} aria-label={n} className="flex h-[42px] items-center justify-center">
                      <svg width="36" height="36" viewBox="0 0 36 36" fill="none">{ribbonArt[n]}</svg>
                    </button>
                  ))}
                </div>
              ) : (
                <div key={i} className="mx-[7px] my-1 w-px bg-[#c4c4c4]" />
              ),
            )}
          </div>
          <div className="relative flex h-5 items-center justify-center bg-[#202020] font-['Liberation_Sans',sans-serif] text-[15px] leading-4 text-white">
            <span className="pr-[14px] pb-px">{g.name}</span>
            <svg width="12" height="14" className="absolute right-[3px] bottom-1" fill="#8c8c8c"><path d="M4.500 1H7.500V6H11L6 13 1 6H4.500Z" /></svg>
          </div>
        </div>
      ))}
    </div>
  );
}

/* ---------- Grasshopper canvas ---------- */

const OX = 102;
const OY = 490;

type Comp = { x: number; y: number; w: number; h: number; split: number; name: string; ins: string[]; out: string; on?: boolean; badge?: boolean };
const comps: Comp[] = [
  { x: 154, y: 750, w: 103, h: 59, split: 38, name: "Merge", ins: ["D1", "D2", "D3"], out: "Result", badge: true },
  { x: 115, y: 893, w: 111, h: 88, split: 48, name: "Offset Curve", ins: ["Curve", "Distance", "Plane", "Corners"], out: "Curve" },
  { x: 409, y: 747, w: 111, h: 124, split: 37, name: "Boundary Surfaces", ins: ["Edges"], out: "Surfaces" },
  { x: 393, y: 959, w: 111, h: 124, split: 37, name: "Boundary Surfaces", ins: ["Edges"], out: "Surfaces" },
  { x: 654, y: 798, w: 129, h: 60, split: 51, name: "Extrude", ins: ["Base", "Direction"], out: "Extrusion" },
  { x: 662, y: 1005, w: 129, h: 60, split: 51, name: "Extrude", ins: ["Base", "Direction"], out: "Extrusion" },
  { x: 909, y: 899, w: 88, h: 59, split: 24, name: "Merge", ins: ["D1", "D2", "D3"], out: "Result" },
  { x: 1038, y: 882, w: 101, h: 83, split: 36, name: "Solid Union", ins: ["Breps"], out: "Result", on: true },
];
const panels = [
  { x: 256, y: 563, w: 127, h: 93, item: "Circular Curve" },
  { x: 911, y: 757, w: 148, h: 93, item: "Closed Brep" },
];

const wires = [
  "M261 779C375 779 140 609 252 609",
  "M261 779C330 779 335 808 405 808",
  "M103 847C120 800 100 762 152 761",
  "M230 937C320 937 60 780 152 780",
  "M230 937C310 937 310 1021 389 1021",
  "M524 809C570 809 605 814 650 814",
  "M509 1021H658",
  "M787 828C850 828 845 910 905 910",
  "M795 1034C860 1034 845 928 905 928",
  "M1001 928C1065 928 845 803 907 803",
  "M103 901Q107 903 112 905",
];

const ports: number[][] = [
  ...comps.flatMap((c) => [
    ...c.ins.map((_, i) => [c.x - 1, c.y + (c.h * (i + 0.5)) / c.ins.length]),
    [c.x + c.w + 1, c.y + c.h / 2],
  ]),
  ...panels.flatMap((p) => [[p.x - 1, p.y + 46], [p.x + p.w + 1, p.y + 46]]),
];

function Node({ c }: { c: Comp }) {
  return (
    <div
      style={{ left: c.x - OX, top: c.y - OY, width: c.w, height: c.h }}
      className={`${c.on ? "border-[#2d5a10] from-[#a2f254] to-[#7ed232]" : "border-[#3c3c3c] from-[#e6e6e6] to-[#c2c2c2]"} absolute flex rounded-[3px] border bg-gradient-to-b font-['Open_Sans',sans-serif] text-[10px] leading-3 text-[#1c1c1c] shadow-[0_2px_2px_rgba(0,0,0,0.25)]`}
    >
      <div style={{ width: c.split - 1 }} className="relative flex shrink-0 flex-col pr-1 text-right">
        {c.badge && (
          <span className="absolute top-[3px] left-[2px] flex h-[13px] w-[13px] items-center justify-center rounded-[2px] border border-[#555]">
            <svg width="9" height="9" fill="none" stroke="#444" strokeWidth="1.5"><path d="M4.500 9V1M1 5 4.500 1 8 5" /></svg>
          </span>
        )}
        {c.ins.map((t) => (
          <span key={t} className="flex flex-1 items-center justify-end">{t}</span>
        ))}
      </div>
      <div className={`${c.on ? "bg-[#264d1e] text-[#c8ffb0]" : "bg-[#3e3e3e] text-white"} my-px flex w-[23px] shrink-0 items-center justify-center rounded-[3px] border border-black`}>
        <span className="rotate-180 text-[12px] leading-4 font-bold whitespace-nowrap [writing-mode:vertical-rl]">{c.name}</span>
      </div>
      <div className="flex flex-1 items-center pl-1">{c.out}</div>
    </div>
  );
}

function DataPanel({ p }: { p: (typeof panels)[number] }) {
  const item = (n: string, last = false) => (
    <div className={`flex ${last ? "h-3" : "h-[15px]"} items-center bg-[#fff95a]`}>
      <span className="w-[13px] text-center">{n}</span>
      <span className="border-l border-[#d8d040] pl-[2px] whitespace-nowrap">{p.item}</span>
    </div>
  );
  return (
    <div
      style={{ left: p.x - OX, top: p.y - OY, width: p.w, height: p.h }}
      className="absolute flex flex-col overflow-hidden rounded-[3px] border border-[#3c3a10] bg-[#fff95a] font-['Liberation_Mono',monospace] text-[10px] leading-3 text-[#141304] shadow-[0_2px_2px_rgba(0,0,0,0.25)]"
    >
      <div className="h-4 border-b-2 border-[#55521a] bg-[#cac646] text-center font-['Open_Sans',sans-serif] text-[10px] leading-[15px]">Panel</div>
      <div className="h-[17px] bg-gradient-to-b from-[#b8b43a] to-[#d8d44c] pr-[11px] text-right leading-[15px]">{"{0;0;0;0}"}</div>
      {item("0")}
      {item("1")}
      <div className="h-[17px] border-t border-[#8a8630] bg-[#d8d44c] pr-[11px] text-right leading-[15px]">{"{0;0;1;0}"}</div>
      {item("0", true)}
      <span className="absolute top-4 right-px h-[23px] w-[6px] rounded bg-[#8e8a34]" />
    </div>
  );
}

function Canvas() {
  return (
    <div className="relative min-h-0 flex-1 overflow-hidden bg-[#d4d0c8]">
      <svg className="absolute inset-0 h-full w-full" fill="none">
        <g transform={`translate(${-OX} ${-OY})`}>
          <g stroke="#b2aea7" strokeWidth="1">
            {Array.from({ length: 7 }, (_, i) => <path key={i} d={`M${237.5 + i * 138} 490V1552`} />)}
            {Array.from({ length: 23 }, (_, i) => <path key={i} d={`M102 ${533.5 + i * 46}H1159`} />)}
          </g>
          <g stroke="#55544f" strokeWidth="5" strokeDasharray="8 8" strokeLinecap="round">
            {wires.map((d) => <path key={d} d={d} />)}
          </g>
          <g stroke="#bdbab2" strokeWidth="2" strokeDasharray="8 8" strokeLinecap="round">
            {wires.map((d) => <path key={d} d={d} />)}
          </g>
          <path d="M1006 929Q1020 924 1034 923" stroke="#7cc840" strokeWidth="5" strokeDasharray="8 8" strokeLinecap="round" />
          <path d="M1006 929Q1020 924 1034 923" stroke="#bfe49a" strokeWidth="2" strokeDasharray="8 8" strokeLinecap="round" />
          <path d="M107 1038C145 1038 135 1012 103 966M103 928L113 926" stroke="#5a5954" strokeWidth="3" />
          <rect x="96" y="1030" width="10" height="18" rx="2" fill="#ddd" stroke="#333" />
          <circle cx="107" cy="1038" r="3.500" fill="#fff" stroke="#111" strokeWidth="2" />
          {ports.map(([x, y]) => <circle key={`${x},${y}`} cx={x} cy={y} r="4" fill="#fff" stroke="#0a0a0a" strokeWidth="2" />)}
        </g>
      </svg>
      {comps.map((c) => <Node key={`${c.x}-${c.y}`} c={c} />)}
      {panels.map((p) => <DataPanel key={p.x} p={p} />)}
      <div className="absolute bottom-0 left-0 flex h-[42px] w-[95px] items-center gap-1 border border-black bg-gradient-to-b from-[#cfcfcf] to-[#8c8c8c] pl-[5px]">
        <Svg s={34}><circle cx="76" cy="44" r="34" fill="url(#gold)" stroke="#8a4a00" strokeWidth="5" /><circle cx="36" cy="88" r="24" fill="url(#gold)" stroke="#8a4a00" strokeWidth="5" /></Svg>
        <svg width="38" height="38" viewBox="0 0 36 36" fill="none">{ribbonArt.spiral}</svg>
      </div>
      <svg width="76" height="76" className="absolute right-3 bottom-[7px]" fill="none">
        <path d="M1 16 12 14 16 18Q22 10 28 10L30 5 42 3 44 10Q24 12 16 34H11L10 28 5 26Z" fill="#000" />
        <circle cx="41" cy="38" r="31" fill="#fff" stroke="#444" strokeWidth="1" />
        <circle cx="41" cy="38" r="28" fill="url(#dial)" stroke="#888" strokeWidth="1" />
        <path d="M51 9 65 21 53 23ZM12 27 23 29 14 39ZM70 49 59 48 66 59ZM31 67 31 54 19 57Z" fill="#fff" />
      </svg>
    </div>
  );
}

/* ---------- Grasshopper window ---------- */

const Caret = () => <svg width="9" height="5" className="shrink-0"><path d="M0 0H9L4.500 5Z" /></svg>;
const Divider = () => <span className="block h-[34px] w-px shrink-0 bg-[#c4c4c4]" />;

function Cyl({ fill, stroke, hole }: { fill: string; stroke: string; hole: string }) {
  return (
    <>
      <path d="M12 72 56 16Q80 6 104 26 118 44 110 58L66 112Q44 122 22 104 8 88 12 72Z" fill={fill} stroke={stroke} strokeWidth="4" />
      <ellipse cx="84" cy="38" rx="28" ry="20" transform="rotate(42 84 38)" fill={hole} stroke={stroke} strokeWidth="4" />
      <ellipse cx="84" cy="38" rx="15" ry="9" transform="rotate(42 84 38)" fill={fill} stroke={stroke} strokeWidth="3" />
    </>
  );
}

function Grasshopper() {
  return (
    <section className="absolute top-[195px] left-[101px] flex h-[1387px] w-[1059px] flex-col border border-[#8c8c8c] bg-[#f0f0f0] shadow-[2px_4px_12px_rgba(0,0,0,0.35)]">
      <header className="flex h-[45px] shrink-0 items-center bg-white pl-[10px] text-[17px] text-[#999]">
        <h2>Grasshopper - nestedCups*</h2>
        <div className="ml-auto flex">
          <button aria-label="Minimize" className="flex w-[70px] justify-center"><svg width="16" height="16" stroke="#888" strokeWidth="1.4"><path d="M0 8H16" /></svg></button>
          <button aria-label="Maximize" className="flex w-[70px] justify-center"><svg width="16" height="16" fill="none" stroke="#888" strokeWidth="1.4"><path d="M1 1H15V15H1Z" /></svg></button>
          <button aria-label="Close" className="flex w-[70px] justify-center"><svg width="16" height="16" stroke="#888" strokeWidth="1.4"><path d="M1 1 15 15M15 1 1 15" /></svg></button>
        </div>
      </header>
      <nav className="flex h-10 shrink-0 items-center gap-6 bg-gradient-to-r from-[#f0f0f0] to-[#fcfcfc] pr-[13px] pl-4 text-[17px] text-black">
        {["File", "Edit", "View", "Display", "Solution", "Help"].map((m) => <button key={m}>{m}</button>)}
        <span className="ml-auto">nestedCups*</span>
      </nav>
      <div className="flex h-[33px] shrink-0 items-stretch font-['Liberation_Sans',sans-serif] text-[16px] text-[#6a6a6a]">
        <button className="relative z-10 -mb-px w-[81px] rounded-t-lg border border-b-0 border-[#9a9a9a] bg-gradient-to-b from-white to-[#e4e4e4] pr-[2px] pb-1 text-black">Params</button>
        <div className="flex items-center gap-[25px] pt-px pl-3">
          {["Maths", "Sets", "Vector", "Curve", "Surface", "Mesh", "Intersect", "Transform", "Display", "Kangaroo2"].map((t) => <button key={t}>{t}</button>)}
        </div>
      </div>
      <Ribbon />
      <div className="flex h-[45px] shrink-0 items-center border-t-2 border-[#7a7a7a] bg-gradient-to-b from-white to-[#f3f3f3] pr-2 pb-[2px] pl-1">
        <button aria-label="Open"><Svg s={34}><path d="M24 12H66L82 28V60H24Z" fill="#f4f4f4" /><path d="M12 116V54H58L68 42H110V116Z" fill="url(#green)" stroke="#2a6a10" strokeWidth="4" /></Svg></button>
        <button aria-label="Save" className="ml-2"><Svg s={34}><path d="M6 8H118V118H18L6 106Z" fill="#1c58d0" stroke="#123070" strokeWidth="4" /><path d="M26 10H100V58H26Z" fill="#e8e8e8" stroke="#888" /><path d="M38 24H88M38 36H88" stroke="#aaa" /><path d="M30 76H90V116H30Z" fill="#d0d0d0" /><path d="M38 82H58V110H38Z" fill="#1c58d0" /></Svg></button>
        <span className="mr-1 ml-2"><Divider /></span>
        <span className="relative">
          <select aria-label="Zoom" className="block h-[33px] w-[202px] appearance-none border border-[#777] bg-white pl-[3px] text-[17px] text-black outline-none"><option>92%</option></select>
          <svg width="12" height="8" className="pointer-events-none absolute top-[13px] right-[7px]" fill="none" stroke="#444" strokeWidth="1.3"><path d="M1 1 6 6 11 1" /></svg>
        </span>
        <button aria-label="Zoom extents" className="mr-2 ml-[7px]"><Svg s={33}><path d="M8 44V8H44M82 8H118V44M118 82V118H82M44 118H8V82" stroke="#151515" strokeWidth="15" /><path d="M50 50 76 76M76 50 50 76" stroke="#222" strokeWidth="9" /></Svg></button>
        <Caret />
        <button aria-label="Preview" className="mx-2"><Svg s={34}><path d="M4 64Q62 -10 122 64 62 132 4 64Z" fill="#f4f4f4" stroke="#555" strokeWidth="6" /><circle cx="63" cy="62" r="34" fill="url(#cyan)" stroke="#1a6a9c" strokeWidth="4" /><circle cx="63" cy="62" r="15" fill="#0a1a40" stroke="none" /><circle cx="55" cy="52" r="7" fill="#fff" stroke="none" /></Svg></button>
        <Caret />
        <button aria-label="Sketch" className="ml-[6px]"><Svg s={36}><path d="M8 30Q42 34 26 76 18 114 48 106" stroke="#3a1010" strokeWidth="7" /><path d="M116 6 122 66 76 102 60 82Z" fill="url(#red)" stroke="none" /><path d="M60 82 76 102 44 114Z" fill="#f0c060" stroke="#6a3010" /></Svg></button>
        <div className="ml-auto flex items-center gap-1">
          <button aria-label="No preview" className="flex h-10 w-[37px] items-center justify-center"><Svg s={34}><path d="M30 60 46 14Q74 -2 96 20L96 52Q70 80 30 60Z" fill="url(#grey)" stroke="#888" /><ellipse cx="72" cy="28" rx="18" ry="13" fill="#ddd" stroke="#888" /><ellipse cx="68" cy="84" rx="36" ry="22" fill="#3c3c3c" stroke="#222" /><path d="M30 92Q66 144 106 90 92 108 68 108 44 108 30 92Z" fill="#ddd" stroke="#444" /></Svg></button>
          <button aria-label="Wireframe preview" className="flex h-10 w-10 items-center justify-center"><Svg s={34}><Cyl fill="#f6f6f6" stroke="#444" hole="#fff" /><ellipse cx="40" cy="86" rx="24" ry="17" transform="rotate(42 40 86)" stroke="#777" strokeWidth="4" /></Svg></button>
          <button aria-label="Shaded preview" className="flex h-10 w-10 items-center justify-center border border-[#1078d0] bg-[#fafcff]"><Svg s={35}><Cyl fill="url(#red)" stroke="#5a0000" hole="#a80c00" /></Svg></button>
          <span className="mx-1"><Divider /></span>
          <button aria-label="Selected only" className="flex w-[38px] justify-center"><Svg s={34}><Cyl fill="url(#green)" stroke="#2a4a10" hole="#70c030" /><path d="M14 56 72 114Q44 124 22 104 6 84 14 56Z" fill="#ddd" stroke="#777" /><path d="M6 34 92 120" stroke="#111" strokeWidth="5" /></Svg></button>
          <button aria-label="Document preview" className="flex w-[36px] justify-center"><Svg s={34}><circle cx="63" cy="58" r="46" fill="url(#grey)" stroke="#666" strokeWidth="4" /><path d="M63 12A46 46 0 0 0 63 104Z" fill="#e87818" stroke="#8a3a00" strokeWidth="4" /></Svg></button>
          <Divider />
          <button aria-label="Mesh quality" className="flex w-[34px] justify-center"><Svg s={32}><path d="M40 12 92 14 118 54 100 102 56 116 16 90 12 40Z" fill="url(#cyan)" stroke="#1a3a8c" strokeWidth="6" /></Svg></button>
          <Caret />
        </div>
      </div>
      <Canvas />
      <footer className="flex h-[32px] shrink-0 items-center border-t-2 border-white bg-[#f0f0f0] pr-[6px] pl-1 text-[17px] text-black">
        <Svg s={25}><circle cx="63" cy="63" r="56" fill="#1c70b8" stroke="#0c2a6a" strokeWidth="9" /><rect x="54" y="22" width="18" height="48" rx="9" stroke="#fff" strokeWidth="6" /><circle cx="63" cy="90" r="9" stroke="#fff" strokeWidth="6" /></Svg>
        <span className="ml-1">Autosave complete (180 seconds ago)</span>
        <span className="ml-auto text-[#7a7a7a]">1.0.0007</span>
        <svg width="14" height="14" className="ml-7 self-end" fill="#999"><path d="M10 0H13V3H10ZM10 5H13V8H10ZM10 10H13V13H10ZM5 5H8V8H5ZM5 10H8V13H5ZM0 10H3V13H0Z" /></svg>
      </footer>
    </section>
  );
}

/* ---------- taskbar ---------- */

const chrome = (
  <>
    <path d="M20 20 3.500 11A18.500 18.500 0 0 1 36.500 12Z" fill="#e04030" />
    <path d="M20 20 36.500 12A18.500 18.500 0 0 1 19 38.500Z" fill="#fbc820" />
    <path d="M20 20 19 38.500A18.500 18.500 0 0 1 3.500 11Z" fill="#2fa050" />
    <circle cx="20" cy="20" r="9" fill="#fff" />
    <circle cx="20" cy="20" r="7" fill="#3f80f0" />
  </>
);
const letter = (t: string, x: number, y: number) => <text x={x} y={y} fontSize="13" fontWeight="bold" fill="#fff" textAnchor="middle" fontFamily="Open Sans">{t}</text>;

const apps: { name: string; art: ReactNode; line?: string; active?: boolean }[] = [
  { name: "File Explorer", line: "w-[61px]", art: <><path d="M4 6H16L18 10H36V34H4Z" fill="#e8a818" /><path d="M4 12H36V34H4Z" fill="#ffd768" /><path d="M10 36V25Q10 22 13 22H27Q30 22 30 25V36H25V30H15V36Z" fill="#3a96dd" /></> },
  { name: "Microsoft Store", art: <><path d="M13 10Q13 2 20 2T27 10" fill="none" stroke="#fff" strokeWidth="2.5" /><path d="M3 10H37V37H3Z" fill="#fff" /><path d="M12 15H19V22H12Z" fill="#f25022" /><path d="M21 15H28V22H21Z" fill="#7fba00" /><path d="M12 24H19V31H12Z" fill="#00a4ef" /><path d="M21 24H28V31H21Z" fill="#ffb900" /></> },
  { name: "Excel", art: <><rect x="9" y="4" width="28" height="32" rx="2" fill="#21a366" /><path d="M23 4H37V12H23Z" fill="#33c481" /><path d="M9 12H23V28H9ZM23 20H37V28H23Z" fill="#107c41" /><path d="M9 28H37V36H9Z" fill="#185c37" /><rect x="3" y="11" width="18" height="18" rx="1" fill="#107c41" />{letter("X", 12, 25)}</> },
  { name: "Outlook", line: "w-[61px]", art: <><rect x="10" y="4" width="26" height="28" rx="2" fill="#0a5cb0" /><path d="M19 4H36V12H19Z" fill="#28a8ea" /><path d="M28 12H36V20H28Z" fill="#50d9ff" /><path d="M9 18 23 27 38 18V36H9Z" fill="#1490df" /><rect x="2" y="11" width="18" height="18" rx="1" fill="#0f78d4" />{letter("O", 11, 25)}</> },
  { name: "Chrome", art: <>{chrome}<circle cx="28" cy="29" r="11" fill="#c8a890" /><path d="M21 36Q22 22 28 20 34 22 35 36 28 42 21 36Z" fill="#7a5540" /><circle cx="28" cy="27" r="5" fill="#f0c8b0" /></> },
  { name: "OneNote", art: <><rect x="10" y="4" width="27" height="32" rx="2" fill="#ca64ea" /><path d="M29 12H37V20H29Z" fill="#ae4bd5" /><path d="M29 20H37V28H29Z" fill="#9332bf" /><path d="M29 28H37V36H29Z" fill="#7719aa" /><rect x="2" y="11" width="18" height="18" rx="1" fill="#7719aa" />{letter("N", 11, 25)}</> },
  { name: "Teams", art: <><circle cx="20" cy="8" r="5.500" fill="#7b83eb" /><circle cx="30" cy="10" r="4" fill="#5059c9" /><path d="M25 16H36V30H25Z" fill="#5059c9" /><path d="M12 15H28V32Q20 40 12 32Z" fill="#7b83eb" /><rect x="2" y="11" width="18" height="18" rx="1" fill="#4b53bc" />{letter("T", 11, 25)}<circle cx="30" cy="31" r="8" fill="#7fba00" stroke="#fff" strokeWidth="1" /><path d="M26 31 29 34 34 28" fill="none" stroke="#fff" strokeWidth="2" /></> },
  { name: "Rhino", line: "w-full", active: true, art: null },
  { name: "Chrome profile", line: "w-[61px]", art: <>{chrome}<circle cx="29" cy="30" r="9.500" fill="#455a64" /><text x="29" y="34" fontSize="10" fill="#ddd" textAnchor="middle" fontFamily="Open Sans">P</text></> },
  { name: "Discord", line: "w-[61px]", art: <><path d="M8 6H32Q35 6 35 9V38L28 32H8Q5 32 5 29V9Q5 6 8 6Z" fill="#7289da" /><path d="M11 26Q9 16 14 13 20 11 26 13 31 16 29 26 26 28 24 25H16Q14 28 11 26Z" fill="#fff" /><circle cx="16" cy="20" r="2" fill="#7289da" /><circle cx="24" cy="20" r="2" fill="#7289da" /><circle cx="30" cy="31" r="9.500" fill="#f04747" /><circle cx="30" cy="31" r="4" fill="#fff" /></> },
];

function TrayIcon({ name, w, children }: { name: string; w: string; children: ReactNode }) {
  return (
    <button aria-label={name} className={`${w} flex justify-center`}>
      <svg width="28" height="28" viewBox="0 0 28 28" fill="none" stroke="#fff" strokeWidth="1.6">{children}</svg>
    </button>
  );
}

function Taskbar() {
  return (
    <footer className="flex h-[60px] shrink-0 items-center bg-gradient-to-r from-[#103c58] via-[#0d3a58] to-[#062b54] text-white">
      <button aria-label="Start" className="flex w-[73px] justify-center">
        <svg width="24" height="24" fill="#fff"><path d="M0 3.500 10 2V11.500H0ZM11.500 1.800 24 0V11.500H11.500ZM0 12.500H10V22L0 20.500ZM11.500 12.500H24V24L11.500 22.200Z" /></svg>
      </button>
      <label className="flex h-[60px] w-[514px] items-center gap-[17px] border border-[#64798a] bg-[#335267] pl-[17px]">
        <svg width="24" height="24" fill="none" stroke="#e4eaee" strokeWidth="1.8"><circle cx="15" cy="9" r="7.500" /><path d="M10 15 1 23" /></svg>
        <input aria-label="Type here to search" placeholder="Type here to search" className="h-8 flex-1 text-[21px] outline-none placeholder:text-[#ccd5db]" />
      </label>
      <button aria-label="Cortana" className="flex w-[74px] justify-center"><svg width="26" height="26" fill="none" stroke="#fff" strokeWidth="3"><circle cx="13" cy="13" r="10.500" /></svg></button>
      <button aria-label="Task view" className="mr-[2px] flex w-[71px] justify-center">
        <svg width="26" height="26" fill="none" stroke="#dfe6ea" strokeWidth="1.6"><path d="M2 2V6H17V2M2 9H17V18H2ZM2 25V21H17V25M23 2V25" /><path d="M23 8V12" strokeWidth="4" /></svg>
      </button>
      {apps.map((a) => (
        <button key={a.name} aria-label={a.name} className={`${a.active ? "bg-[#06589c]" : ""} relative flex h-[60px] w-[75px] items-center justify-center`}>
          {a.active ? <RhinoLogo w={36} h={36} /> : <svg width="40" height="42" viewBox="0 0 40 42">{a.art}</svg>}
          {a.line && <span className={`${a.line} absolute bottom-0 h-[3px] bg-[#8cc4f0]`} />}
        </button>
      ))}
      <div className="ml-auto flex h-full items-center border-r border-[#5c7890]">
        <TrayIcon name="Show hidden icons" w="w-[48px]"><path d="M7 18 14 10 21 18" /></TrayIcon>
        <TrayIcon name="OneDrive" w="w-[48px]"><path d="M3 18Q2 13 6 12 8 5 14 6 20 6 20 12 25 13 24 18Z" fill="#1480d8" stroke="none" /><circle cx="19" cy="19" r="7" fill="#d82828" stroke="none" /><path d="M16.500 16.500 21.500 21.500M21.500 16.500 16.500 21.500" /></TrayIcon>
        <TrayIcon name="Battery" w="w-[48px]"><path d="M8 8H24V19H8V15M25.500 11V16M3 5V9Q3 11 5 11T7 9V5M5 11V18" /><path d="M9 10H15V17H10Z" fill="#fff" /></TrayIcon>
        <TrayIcon name="Network" w="w-[48px]"><path d="M5 24Q6 8 22 6M10 24Q11 13 22 11M15 24Q16 18 22 16" /><circle cx="20" cy="22" r="1.500" fill="#fff" /></TrayIcon>
        <TrayIcon name="Volume" w="w-[46px]"><path d="M3 11H7L13 6V22L7 17H3ZM16 11Q18 14 16 17M19 8Q23 14 19 20" /><path d="M22 5Q28 14 22 23" stroke="#6c8aa4" /></TrayIcon>
        <TrayIcon name="Pen" w="w-[60px]"><path d="M10 18 20 5Q24 3 23 8L14 20 9 22ZM9 13Q2 18 6 23 14 26 14 16" /></TrayIcon>
        <div className="ml-[3px] flex w-[100px] flex-col items-center text-[17px] leading-7"><span>12:18 AM</span><span>4/29/2020</span></div>
        <button aria-label="Notifications" className="mr-[25px] ml-5 flex w-[28px] justify-center">
          <svg width="28" height="28"><path d="M1 2H25V20H19L14 26V20H1Z" fill="#fff" /><path d="M6 7H20M6 11H20M6 15H16" stroke="#0a3058" strokeWidth="1.600" /><path d="M18 16A5 5 0 1 0 26 22 6 6 0 0 1 18 16Z" fill="#fff" stroke="#0a3058" /></svg>
        </button>
      </div>
      <span className="w-2" />
    </footer>
  );
}

export default function App() {
  return (
    <div className="relative flex h-screen min-h-[1664px] w-full flex-col overflow-hidden bg-[#eaebef] font-['Open_Sans','Noto_Sans',sans-serif]">
      <Defs />
      <TopBars />
      <main className="flex min-h-0 flex-1">
        <div className="w-[93px] shrink-0 pt-[5px]">
          <div className="mb-1 h-px w-[84px] bg-[#c4c8da]" />
          <Palette />
        </div>
        <Viewports />
        <Properties />
      </main>
      <StatusBar />
      <Taskbar />
      <Grasshopper />
    </div>
  );
}
